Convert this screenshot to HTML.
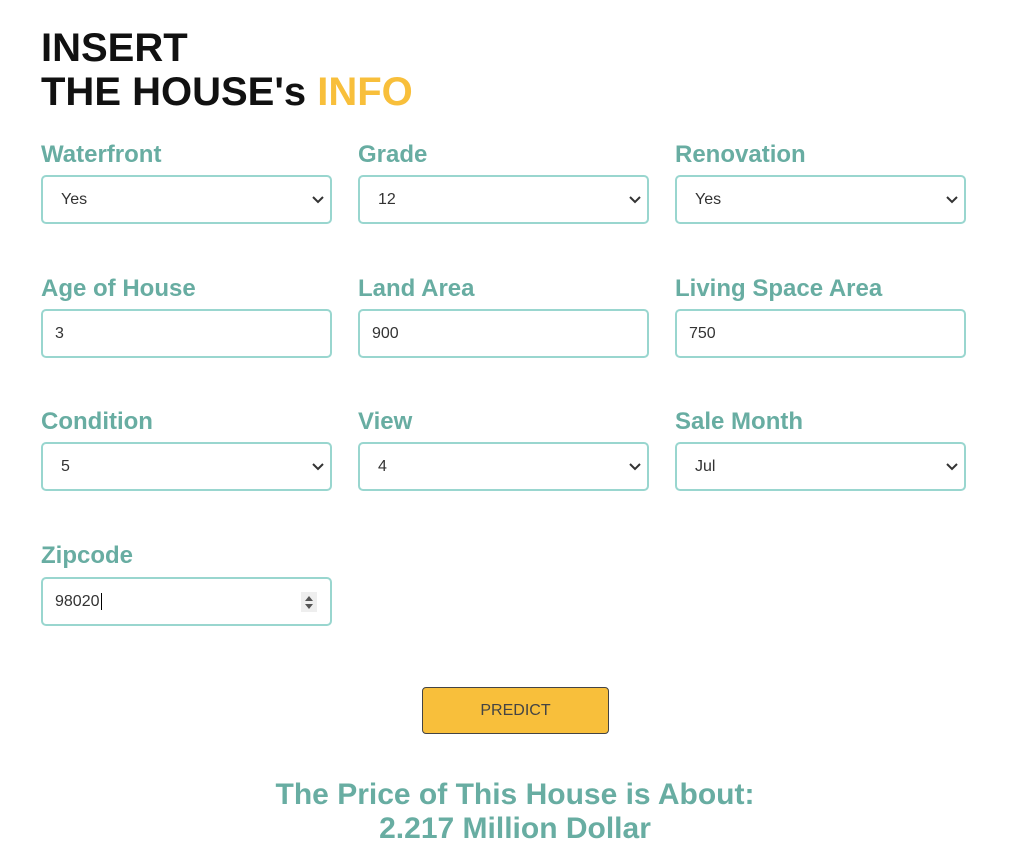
<!DOCTYPE html>
<html><head><meta charset="utf-8"><style>
body{margin:0;background:#fff;font-family:"Liberation Sans",Arial,sans-serif;width:1015px;height:853px;position:relative;overflow:hidden}
.t{position:absolute;left:41px;font-weight:bold;font-size:40px;line-height:44px;color:#111}
.l{position:absolute;font-weight:bold;font-size:24px;color:#68ada2;line-height:26px;margin-top:1px}
.b{position:absolute;width:287px;height:45px;border:2px solid #99d6cf;border-radius:5px;font-size:16px;color:#333;line-height:45px;box-sizing:content-box}
.b span{position:absolute;left:18px}
.b svg{position:absolute;right:5px;top:18px}
.in span{left:12px}
.btn{position:absolute;left:422px;top:687px;width:185px;height:45px;background:#f8bf3b;border:1px solid #444;border-radius:4px;font-size:16px;color:#444;text-align:center;line-height:45px}
.r{position:absolute;left:0;width:1030px;text-align:center;font-weight:bold;font-size:30px;color:#68ada2;line-height:34px}
</style></head><body>
<div class="t" style="top:26px">INSERT<br>THE HOUSE's <span style="color:#f8bf3b">INFO</span></div>

<div class="l" style="left:41px;top:141px">Waterfront</div>
<div class="l" style="left:358px;top:141px">Grade</div>
<div class="l" style="left:675px;top:141px">Renovation</div>
<div class="b" style="left:41px;top:175px"><span>Yes</span><svg width="14" height="10"><path d="M2 2l5 5 5-5" stroke="#333" stroke-width="2" fill="none"/></svg></div>
<div class="b" style="left:358px;top:175px"><span>12</span><svg width="14" height="10"><path d="M2 2l5 5 5-5" stroke="#333" stroke-width="2" fill="none"/></svg></div>
<div class="b" style="left:675px;top:175px"><span>Yes</span><svg width="14" height="10"><path d="M2 2l5 5 5-5" stroke="#333" stroke-width="2" fill="none"/></svg></div>

<div class="l" style="left:41px;top:275px">Age of House</div>
<div class="l" style="left:358px;top:275px">Land Area</div>
<div class="l" style="left:675px;top:275px">Living Space Area</div>
<div class="b in" style="left:41px;top:309px"><span>3</span></div>
<div class="b in" style="left:358px;top:309px"><span>900</span></div>
<div class="b in" style="left:675px;top:309px"><span>750</span></div>

<div class="l" style="left:41px;top:408px">Condition</div>
<div class="l" style="left:358px;top:408px">View</div>
<div class="l" style="left:675px;top:408px">Sale Month</div>
<div class="b" style="left:41px;top:442px"><span>5</span><svg width="14" height="10"><path d="M2 2l5 5 5-5" stroke="#333" stroke-width="2" fill="none"/></svg></div>
<div class="b" style="left:358px;top:442px"><span>4</span><svg width="14" height="10"><path d="M2 2l5 5 5-5" stroke="#333" stroke-width="2" fill="none"/></svg></div>
<div class="b" style="left:675px;top:442px"><span>Jul</span><svg width="14" height="10"><path d="M2 2l5 5 5-5" stroke="#333" stroke-width="2" fill="none"/></svg></div>

<div class="l" style="left:41px;top:542px">Zipcode</div>
<div class="b in" style="left:41px;top:577px"><span>98020<span style="position:static;border-left:1px solid #000;margin-left:1px"></span></span>
<svg width="16" height="20" style="right:13px;top:13px"><rect width="16" height="20" fill="#eee"/><path d="M4 9l4-5 4 5z M4 12l4 5 4-5z" fill="#555"/></svg></div>

<div class="btn">PREDICT</div>
<div class="r" style="top:778px">The Price of This House is About:</div>
<div class="r" style="top:812px">2.217 Million Dollar</div>
</body></html>
